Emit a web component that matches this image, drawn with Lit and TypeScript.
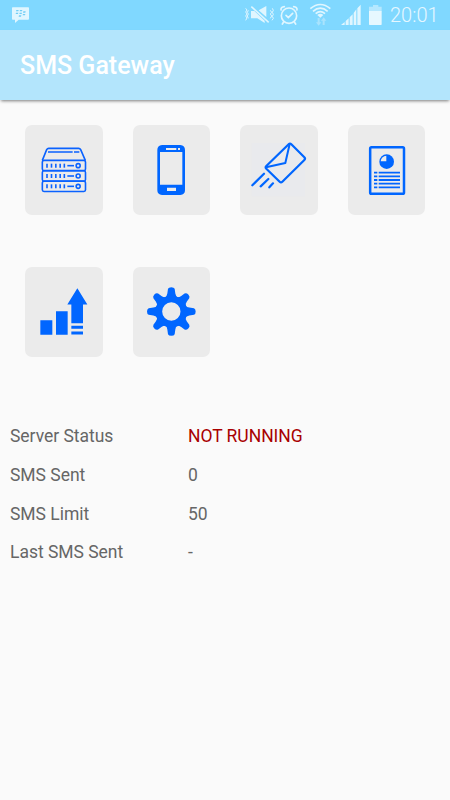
import { LitElement, html, css, svg } from "lit";
import { customElement } from "lit/decorators.js";

const ticks = [131, 162, 193];

const serverIcon = svg`
  <g fill="none" stroke="#0a62ff" stroke-width="4.8" stroke-linejoin="round">
    <path d="M67 121 L80 89 Q82 85 86 85 H176 Q180 85 182 89 L196 121"/>
    <path d="M84 96 H158 M162 96 H178" stroke-width="5"/>
    ${[0, 1, 2].map(i => svg`
      <rect x="67" y=${121 + i * 31.3} width="129.5" height="31" rx="5"/>
      <path d=${`M142 ${137 + i * 31} H162`}/>
      <circle cx="174.5" cy=${137 + i * 31} r="6"/>
      ${[81, 94.5, 107.5, 120.5, 133].map(x => svg`<path d=${`M${x} ${ticks[i]} V${ticks[i] + 12}`}/>`)}
    `)}
  </g>`;

const phoneIcon = svg`
  <path fill="#0066ff" fill-rule="evenodd" d="M102 75 H157 Q171 76 171 90 V211 Q171 224 157 225 H102 Q88 224 88 211 V90 Q88 76 102 75Z M96 96 V194 H163 V96Z M114 84 V90 H145 V84Z M150 84 V90 H156 V84Z M117 203 V213 H144 V203Z"/>`;

const mailIcon = svg`
  <rect x="51" y="69" width="160" height="160" fill="#e9eaed"/>
  <g fill="none" stroke="#0066ff" stroke-width="6.6" stroke-linejoin="round" stroke-linecap="round">
    <path d="M162 73 Q166 69 170 73 L209 112 Q213 116 209 120 L143 185 Q139 189 135 185 L95 146 Q91 142 95 138Z"/>
    <path d="M165 72 L152 129 L94 142" stroke-width="6"/>
    <path d="M88 161 L53 196 M101 177 L78 199 M115 190 L104 202"/>
  </g>`;

const reportIcon = svg`
  <rect x="81.5" y="82" width="101.5" height="139.5" rx="4" fill="none" stroke="#0066ff" stroke-width="7.5"/>
  <circle cx="131" cy="125" r="22" fill="#0066ff"/>
  <path d="M130 124 V107 A18 18 0 0 0 113 124Z" fill="#ebebeb"/>
  <g stroke="#0066ff" stroke-width="5.6">
    ${[158, 169, 180, 191, 202].map(y => svg`<path d=${`M93 ${y} H103 M107 ${y} H171`}/>`)}
  </g>`;

const growthIcon = svg`
  <path fill="#0066ff" d="M61 174H97V218H61Z M108 147H143V218H108Z M172 78 L202 127 H189 V183 H154 V127 H142Z M154 191H189V200H154Z M154 208H189V217H154Z"/>`;

const gearIcon = svg`
  <g fill="#0066ff">
    ${[0, 45, 90, 135, 180, 225, 270, 315].map(a => svg`
      <path transform=${`rotate(${a} 130 148)`} d=${a % 90 === 0
        ? "M109 108 Q117 103 118 94 L120 80 Q122 75 130 75 Q138 75 140 80 L142 94 Q143 103 151 108 L144 112 H116Z"
        : "M109 108 Q117 103 118 94 L120 82 Q122 76 130 76 Q138 76 140 82 L142 94 Q143 103 151 108 L144 112 H116Z"}/>`)}
    <circle cx="130" cy="148" r="37.5" fill="none" stroke="#0066ff" stroke-width="20"/>
  </g>`;

const tiles = [
  { box: "15 15 232.5 270", art: serverIcon },
  { box: "15 15 232.5 270", art: phoneIcon },
  { box: "16 15 232.5 270", art: mailIcon },
  { box: "15 15 232.5 270", art: reportIcon },
  { box: "15 14.5 232.5 270", art: growthIcon },
  { box: "15 14.5 232.5 270", art: gearIcon },
];

const rows = [
  { label: "Server Status", value: "NOT RUNNING", alert: true },
  { label: "SMS Sent", value: "0", alert: false },
  { label: "SMS Limit", value: "50", alert: false },
  { label: "Last SMS Sent", value: "-", alert: false },
];

@customElement("app-root")
export class AppRoot extends LitElement {
  static styles = css`
    :host {
      display: flex;
      flex-direction: column;
      height: 800px;
      background: #fafafa;
      font-family: Roboto, "Liberation Sans", sans-serif;
      overflow: hidden;
    }
    svg { display: block; }
    .status {
      display: flex;
      justify-content: space-between;
      height: 30px;
      background: #80d8ff;
    }
    .right { display: flex; }
    .clock {
      width: 60px;
      font-size: 20px;
      font-weight: 300;
      line-height: 31px;
      color: #e6f7ff;
      white-space: nowrap;
    }
    .bar {
      display: flex;
      align-items: center;
      height: 70px;
      padding: 2px 20px 0;
      box-sizing: border-box;
      background: #b3e5fc;
      box-shadow: 0 2px 3px -1px rgba(0, 0, 0, 0.5);
    }
    .title {
      margin: 0;
      color: #fff;
      font-size: 25px;
      font-weight: 500;
      line-height: 30px;
    }
    .grid {
      display: grid;
      grid-template-columns: repeat(4, 77.5px);
      column-gap: 30px;
      row-gap: 51.7px;
      padding: 25px 25px 0;
    }
    .tile {
      height: 90px;
      border-radius: 7px;
      background: #ebebeb;
    }
    .info {
      margin: 60.3px 0 0;
      padding: 0 10px;
    }
    .row {
      display: grid;
      grid-template-columns: 178px 1fr;
      height: 38.7px;
      align-items: center;
      font-size: 17.5px;
      letter-spacing: -0.03px;
      color: #666;
    }
    .cell { margin: 0; }
    .alert { color: #a80000; }
  `;

  render() {
    return html`
      <header class="status">
        <svg width="40" height="30" viewBox="0 0 120 90">
          <path fill="#e0f6ff" d="M38 22H85Q87 22 87 24V56Q87 59 84 59H56L45 69V59H38Q36 59 36 56V24Q36 22 38 22Z"/>
          <path fill="#71cdf5" d="M49 30h7l-1 4h-7zM60 30h7l-1 4h-7zM48 38h7l-1 4h-7zM59 38h7l-1 4h-7zM70 34h7l-1 4h-7zM69 42h7l-1 4h-7zM57 46h7l-1 4h-7z"/>
        </svg>
        <div class="right">
          <svg width="155" height="30" viewBox="0 0 465 90">
            <g fill="none" stroke="#e0f6ff" stroke-width="3">
              <path d="M32 25l4 5-4 6 4 6-4 6 4 6-4 7M40 31l-3 6 3 5-3 6 3 7M106 31l4 6-4 5 4 6-4 7M112 25l3 6-3 6 3 6-3 6 3 6-4 6"/>
              <path d="M49 20L101 67" stroke-width="4.5"/>
            </g>
            <path fill="#e0f6ff" d="M48 33H58L89 62V69L67 55H48ZM71 31L94 18V51Z"/>
            <g fill="none" stroke="#e0f6ff" stroke-width="5" stroke-linecap="round">
              <circle cx="162" cy="47" r="23"/>
              <path d="M153 46L160 53L173 40"/>
              <path d="M138 30Q137 21 148 20M176 20Q187 21 186 30M146 66L142 72M178 66L182 72"/>
            </g>
            <g fill="none" stroke="#e0f6ff" stroke-width="5">
              <path d="M226 26Q256 1 286 26M234 34Q256 15 278 34M242 41Q256 29 270 41"/>
            </g>
            <path fill="#e0f6ff" d="M247 45Q256 38 265 45L256 53Z"/>
            <path fill="#a9e3fd" d="M248 54H254V67H259L251 77L243 67H248ZM263 75H269V62H274L266 52L258 62H263Z"/>
            <path fill="#e0f6ff" d="M318 75L329 66V75ZM332 63L341 55V75H332ZM344 52L353 43V75H344ZM356 39L364 28V75H356ZM367 25L377 14V75H367Z"/>
            <path fill="#b5e8ff" d="M414 15H430V20H440V34H402V20H414Z"/>
            <path fill="#e6f8ff" d="M402 33H440V73Q440 75 438 75H404Q402 75 402 73Z"/>
          </svg>
          <span class="clock">20:01</span>
        </div>
      </header>
      <div class="bar"><h1 class="title">SMS Gateway</h1></div>
      <nav class="grid">
        ${tiles.map(t => html`<div class="tile"><svg width="77.5" height="90" viewBox=${t.box}>${t.art}</svg></div>`)}
      </nav>
      <dl class="info">
        ${rows.map(r => html`
          <div class="row">
            <dt class="cell">${r.label}</dt>
            <dd class="cell ${r.alert ? "alert" : ""}">${r.value}</dd>
          </div>`)}
      </dl>
    `;
  }
}
